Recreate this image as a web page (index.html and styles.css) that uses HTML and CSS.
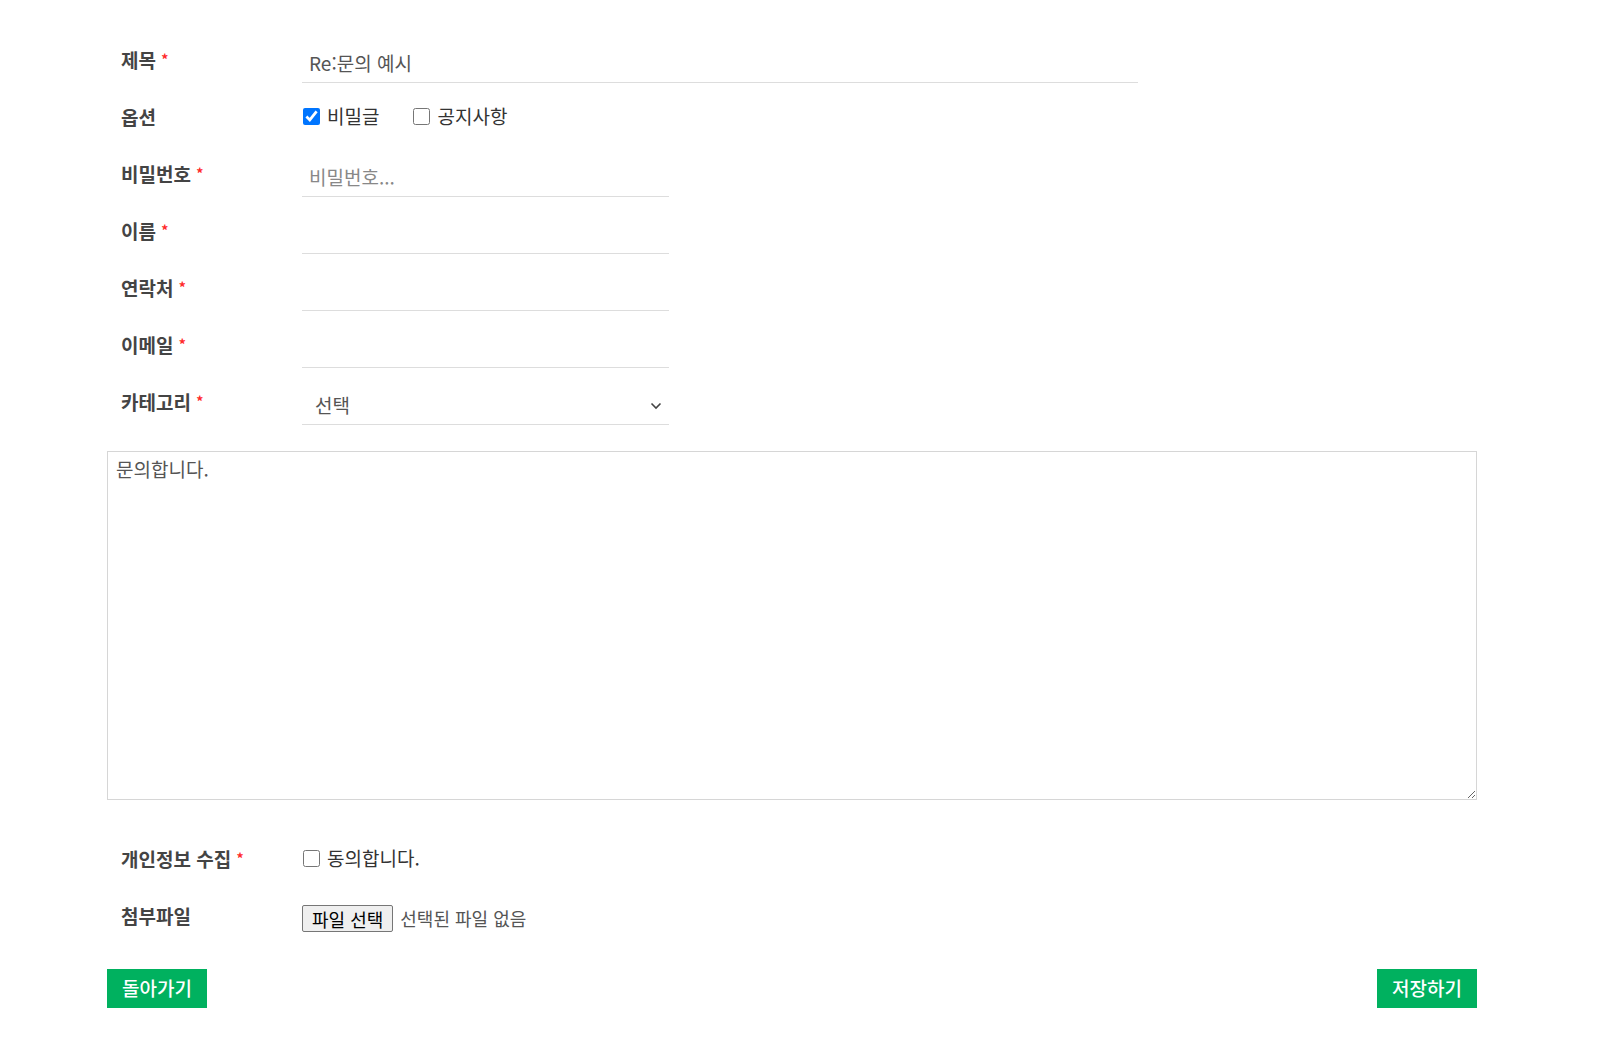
FILE: index.html
```html
<!DOCTYPE html>
<html lang="ko">
<head>
<meta charset="utf-8">
<title>문의 답변</title>
<link rel="stylesheet" href="styles.css">
</head>
<body>
<form class="board-form">
  <div class="form-row">
    <div class="form-label">제목 <span class="req">*</span></div>
    <div class="form-field"><input class="text-input wide" type="text" value="Re:문의 예시"></div>
  </div>
  <div class="form-row">
    <div class="form-label">옵션</div>
    <div class="form-field options">
      <label class="check"><input type="checkbox" checked><span>비밀글</span></label>
      <label class="check"><input type="checkbox"><span>공지사항</span></label>
    </div>
  </div>
  <div class="form-row">
    <div class="form-label">비밀번호 <span class="req">*</span></div>
    <div class="form-field"><input class="text-input" type="password" placeholder="비밀번호..."></div>
  </div>
  <div class="form-row">
    <div class="form-label">이름 <span class="req">*</span></div>
    <div class="form-field"><input class="text-input" type="text"></div>
  </div>
  <div class="form-row">
    <div class="form-label">연락처 <span class="req">*</span></div>
    <div class="form-field"><input class="text-input" type="text"></div>
  </div>
  <div class="form-row">
    <div class="form-label">이메일 <span class="req">*</span></div>
    <div class="form-field"><input class="text-input" type="text"></div>
  </div>
  <div class="form-row">
    <div class="form-label">카테고리 <span class="req">*</span></div>
    <div class="form-field">
      <div class="select-box">
        <span class="select-value">선택</span>
        <svg class="chevron" width="12" height="8" viewBox="0 0 12 8"><path d="M1.5 1.5 L6 6 L10.5 1.5" fill="none" stroke="#444" stroke-width="1.6"/></svg>
      </div>
    </div>
  </div>

  <textarea class="content-area">문의합니다.</textarea>

  <div class="form-row privacy">
    <div class="form-label">개인정보 수집 <span class="req">*</span></div>
    <div class="form-field options">
      <label class="check"><input type="checkbox"><span>동의합니다.</span></label>
    </div>
  </div>
  <div class="form-row">
    <div class="form-label">첨부파일</div>
    <div class="form-field file-field">
      <button type="button" class="file-btn">파일 선택</button>
      <span class="file-name">선택된 파일 없음</span>
    </div>
  </div>

  <div class="actions">
    <button type="button" class="btn-green">돌아가기</button>
    <button type="button" class="btn-green">저장하기</button>
  </div>
</form>
</body>
</html>
```

FILE: styles.css
```css
* { box-sizing: border-box; }
html, body {
  margin: 0;
  padding: 0;
  background: #fff;
}
body {
  font-family: "Noto Sans CJK KR", "Noto Sans", sans-serif;
  color: #444;
}
.board-form {
  width: 1370px;
  margin-left: 107px;
  padding-top: 43px;
}
.form-row {
  display: grid;
  grid-template-columns: 195px 1fr;
  height: 40px;
  margin-bottom: 17px;
}
.form-label {
  padding-left: 14px;
  padding-top: 4px;
  font-size: 19px;
  font-weight: 700;
  line-height: 25px;
  color: #444;
  white-space: nowrap;
}
.req {
  color: #ff2a2a;
  font-size: 14px;
  font-weight: 700;
  position: relative;
  top: -3px;
}
.form-field {
  display: flex;
  align-items: center;
}
.text-input {
  width: 367px;
  height: 40px;
  border: 0;
  border-bottom: 1px solid #ddd;
  padding: 0 7px 1px;
  font-family: inherit;
  font-size: 19px;
  color: #555;
  outline: none;
  background: transparent;
}
.text-input.wide { width: 836px; }
.text-input::placeholder { color: #888; }
.options {
  align-items: flex-start;
  gap: 0;
  padding-top: 3px;
}
.check {
  display: flex;
  align-items: center;
  font-size: 19px;
  line-height: 26px;
  color: #333;
  margin-right: 33px;
}
.check input {
  width: 17px;
  height: 17px;
  margin: 0 7px 0 1px;
  accent-color: #0075ff;
}
.select-box {
  width: 367px;
  height: 40px;
  border-bottom: 1px solid #ddd;
  display: flex;
  align-items: center;
  justify-content: space-between;
  padding: 0 7px 0 13px;
  font-size: 19px;
  color: #555;
}
.chevron { position: relative; top: 1px; }
.content-area {
  display: block;
  width: 1370px;
  height: 349px;
  margin: 26px 0 42px;
  border: 1px solid #d6d6d6;
  padding: 4px 8px;
  font-family: inherit;
  font-size: 19px;
  line-height: 26px;
  color: #555;
  outline: none;
}
.file-field {
  align-items: flex-start;
  padding-top: 6px;
}
.file-btn {
  height: 27px;
  padding: 0 9px;
  border: 1px solid #767676;
  border-radius: 2px;
  background: #efefef;
  font-family: inherit;
  font-size: 18px;
  line-height: 24px;
  color: #000;
  margin-right: 7px;
}
.file-name {
  font-size: 18px;
  line-height: 26px;
  color: #555;
}
.actions {
  display: flex;
  justify-content: space-between;
  margin-top: 30px;
}
.btn-green {
  width: 100px;
  height: 39px;
  border: 0;
  background: #00b15f;
  color: #fff;
  font-family: inherit;
  font-size: 19px;
  font-weight: 500;
  padding: 0 0 2px;
}
```
